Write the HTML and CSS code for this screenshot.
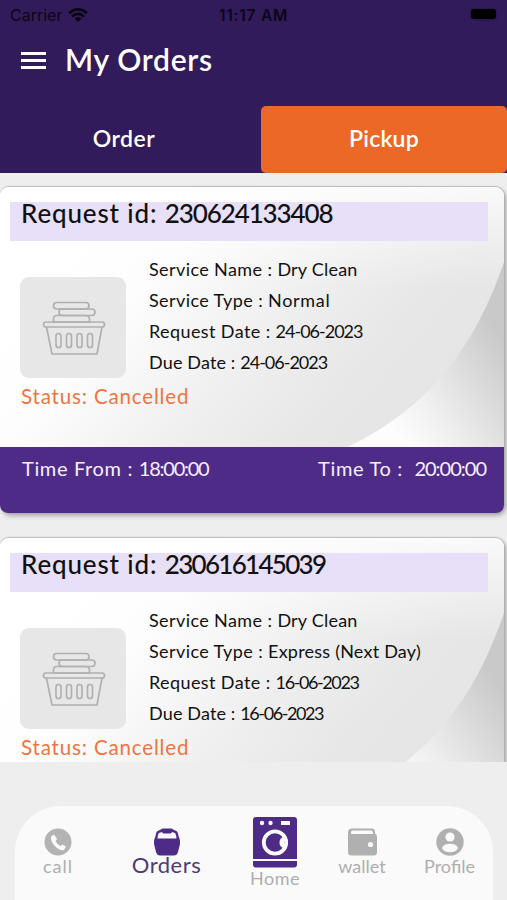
FILE: index.html
```html
<!DOCTYPE html>
<html lang="en">
<head>
<meta charset="utf-8">
<title>My Orders</title>
<link rel="stylesheet" href="styles.css">
</head>
<body>
<svg class="defs" width="0" height="0" aria-hidden="true">
  <defs>
    <linearGradient id="face" gradientUnits="userSpaceOnUse" x1="100" y1="20" x2="390" y2="270">
      <stop offset="0" stop-color="#fff"/><stop offset=".22" stop-color="#fdfdfd"/><stop offset=".55" stop-color="#efefef"/><stop offset=".8" stop-color="#e7e7e7"/><stop offset="1" stop-color="#e5e5e5"/>
    </linearGradient>
    <linearGradient id="top" x1="0" y1="0" x2="0" y2="1">
      <stop offset="0" stop-color="#fff" stop-opacity=".75"/><stop offset="1" stop-color="#fff" stop-opacity="0"/>
    </linearGradient>
    <linearGradient id="fold" gradientUnits="userSpaceOnUse" x1="400" y1="250" x2="515" y2="170">
      <stop offset="0" stop-color="#fdfdfd"/><stop offset=".3" stop-color="#f0f0f0"/><stop offset="1" stop-color="#c9c9c9"/>
    </linearGradient>
    <symbol id="card-art" viewBox="0 0 504 260">
      <rect width="504" height="260" fill="url(#face)"/>
      <rect width="504" height="100" fill="url(#top)"/>
      <path d="M348 260C430 220 475 160 504 75V260Z" fill="url(#fold)"/>
    </symbol>
    <symbol id="basket" viewBox="0 0 106 101">
      <g fill="none" stroke="#b0b0b0" stroke-width="1.700" stroke-linejoin="round">
        <rect x="33.500" y="25.500" width="35.500" height="6.500" rx="3.250"/>
        <rect x="39" y="32" width="36" height="6.500" rx="3.250"/>
        <path d="M36 38.500H66Q69.500 39 69.500 42V45H33.500V42Q33.500 39 36 38.500Z"/>
        <rect x="23.500" y="45" width="61" height="5" rx="2.500"/>
        <path d="M26.500 50L32 77H77L82 50"/>
        <rect x="36" y="56.500" width="5" height="14" rx="2.500"/>
        <rect x="46.500" y="56.500" width="5" height="14" rx="2.500"/>
        <rect x="57" y="56.500" width="5" height="14" rx="2.500"/>
        <rect x="67.500" y="56.500" width="5" height="14" rx="2.500"/>
      </g>
    </symbol>
  </defs>
</svg>

<header class="header">
  <div class="status-bar">
    <div class="carrier"><span>Carrier</span>
      <svg class="wifi" viewBox="0 0 20 14"><path d="M1 5.200Q10-2.800 19 5.200M4 8.500Q10 3.200 16 8.500" fill="none" stroke="#08040f" stroke-width="2.500"/><path d="M6.500 10.500Q10 7.600 13.500 10.500L10 14Z" fill="#08040f"/></svg>
    </div>
    <span class="clock">11:17 AM</span>
    <div class="battery-wrap"><span class="battery"></span></div>
  </div>
  <div class="title-row">
    <div class="menu"><i></i><i></i><i></i></div>
    <h1>My Orders</h1>
  </div>
  <div class="tabs">
    <div class="tab">Order</div>
    <div class="tab active">Pickup</div>
  </div>
</header>

<main class="list">
  <article class="card">
    <svg class="art"><use href="#card-art"/></svg>
    <div class="body">
      <h2>Request id: <span class="num">230624133408</span></h2>
      <div class="info">
        <svg class="thumb"><use href="#basket"/></svg>
        <div class="details">
          <div>Service Name : <span class="word">Dry Clean</span></div>
          <div>Service Type : <span class="word wide">Normal</span></div>
          <div>Request Date : <span class="date">24-06-2023</span></div>
          <div class="due">Due Date : <span class="date">24-06-2023</span></div>
        </div>
      </div>
      <div class="status">Status: Cancelled</div>
    </div>
    <footer class="times"><div>Time From : <span>18:00:00</span></div><div>Time To :&nbsp; <span class="end">20:00:00</span></div></footer>
  </article>
  <article class="card">
    <svg class="art"><use href="#card-art"/></svg>
    <div class="body">
      <h2>Request id: <span class="num narrow">230616145039</span></h2>
      <div class="info">
        <svg class="thumb"><use href="#basket"/></svg>
        <div class="details">
          <div>Service Name : <span class="word">Dry Clean</span></div>
          <div>Service Type : <span class="word">Express (Next Day)</span></div>
          <div>Request Date : <span class="date narrow">16-06-2023</span></div>
          <div class="due">Due Date : <span class="date narrow">16-06-2023</span></div>
        </div>
      </div>
      <div class="status">Status: Cancelled</div>
    </div>
  </article>
</main>

<nav class="nav">
  <div class="item call">
    <svg width="28" height="28" viewBox="0 0 28 28"><circle cx="14" cy="14" r="13.500" fill="#b3b3b3"/><path d="M7 8.500L10 6.500L13 11L11.500 13Q13 16.500 16.500 18L18.500 16.500L22 18.500L20 22Q17 22.800 13 20Q6.500 15 7 8.500Z" fill="#fafafa"/></svg>
    <span>call</span>
  </div>
  <div class="item orders">
    <svg width="28" height="28" viewBox="0 0 28 28"><path d="M10 .5H18Q19.500 .5 20 1.500L23.500 3Q25 4 25.500 8Q27.500 12 27 16L25 24Q24 27.500 21 27.500H7Q4 27.500 3 24L1 16Q.5 12 2.500 8Q3 4 4.500 3L8 1.500Q8.500 .5 10 .5Z" fill="#4d2b87"/><path d="M4.500 10.500Q4.800 6 6 5L9 4Q9.500 5.500 11 5.500H17Q18.500 5.500 19 4L22 5Q23.200 6 23.500 10.500Z" fill="#fafafa"/></svg>
    <span>Orders</span>
  </div>
  <div class="item home">
    <svg width="44" height="51" viewBox="0 0 44 51"><path d="M3 0H41Q44 0 44 3V42H0V3Q0 0 3 0ZM0 44H44V47.500Q44 50.500 41 50.500H3Q0 50.500 0 47.500Z" fill="#4d2b87"/><circle cx="9" cy="6" r="2.200" fill="#fafafa"/><circle cx="17.500" cy="6" r="2.200" fill="#fafafa"/><rect x="28" y="4" width="9" height="4" fill="#fafafa"/><circle cx="22" cy="25.500" r="11.200" fill="none" stroke="#fafafa" stroke-width="3.800"/><path d="M31 19.500Q26.500 21 26.500 25.500Q26.500 30 31 31.500Z" fill="#fafafa"/></svg>
    <span>Home</span>
  </div>
  <div class="item wallet">
    <svg width="29" height="28" viewBox="0 0 29 28"><path d="M4 .5H24Q26.500 .5 27 3V5.500Q29 6 29 9V24Q29 27.500 25.500 27.500H3.500Q0 27.500 0 24V4.500Q0 .5 4 .5Z" fill="#b0b0b0"/><path d="M3 6V4.500Q3 2.500 5 2.500H22.500Q25 2.500 25 5V6Z" fill="#fafafa"/><circle cx="22.500" cy="16.500" r="2.600" fill="#fafafa"/></svg>
    <span>wallet</span>
  </div>
  <div class="item profile">
    <svg width="28" height="28" viewBox="0 0 28 28"><circle cx="14" cy="14" r="13.700" fill="#b0b0b0"/><circle cx="14" cy="9" r="4.600" fill="#fafafa"/><ellipse cx="14" cy="20" rx="7.800" ry="4.200" fill="#fafafa"/></svg>
    <span>Profile</span>
  </div>
</nav>
</body>
</html>
```

FILE: styles.css
```css
* { box-sizing: border-box; }
body {
  margin: 0;
  width: 507px;
  height: 900px;
  overflow: hidden;
  display: flex;
  flex-direction: column;
  background: #eee;
  font-family: Lato, "Liberation Sans", sans-serif;
  color: #111;
}
h1, h2 { margin: 0; font-weight: 500; }
span { white-space: nowrap; }
.defs { position: absolute; }

.header { height: 173px; background: #321b5b; flex: none; }
.status-bar {
  height: 30px;
  padding: 0 10px;
  display: grid;
  grid-template-columns: 1fr auto 1fr;
  align-items: center;
  font: 16px Inter, sans-serif;
  color: #0b0615;
}
.carrier { display: flex; align-items: center; gap: 6px; }
.wifi { width: 20px; height: 14px; }
.clock { font-weight: 600; font-size: 15.500px; letter-spacing: .75px; }
.battery-wrap { display: flex; justify-content: flex-end; }
.battery { width: 25px; height: 10px; margin: 0 1px 2px 0; border-radius: 3px; background: #000; box-shadow: 0 0 2px #170c29; }
.title-row { height: 60px; padding-left: 21px; display: flex; align-items: center; gap: 19px; }
.menu { width: 25px; display: flex; flex-direction: column; gap: 4px; }
.menu i { height: 3px; background: #fff; }
h1 { color: #fff; font-size: 30px; font-weight: 600; letter-spacing: .7px; margin-top: -2px; }
.tabs { margin-top: 16px; height: 67px; display: flex; }
.tab {
  width: 261px;
  padding: 0 13px 3px 0;
  display: flex;
  align-items: center;
  justify-content: center;
  color: #fff;
  font-size: 23px;
  font-weight: 600;
  letter-spacing: .5px;
}
.tab.active { width: 246px; padding-right: 0; background: #ec6827; border-radius: 5px; letter-spacing: .2px; }

.list { height: 589px; padding-top: 14px; overflow: hidden; flex: none; }
.card {
  position: relative;
  width: 504px;
  height: 326px;
  margin-bottom: 24.500px;
  border-radius: 9px;
  background: #fff;
  box-shadow: 0 -1px 1px #bdbdbd, 1px 0 2px #aaa, 2px 3px 4px #aaa;
}
.art { position: absolute; inset: 0; width: 504px; height: 260px; border-radius: 9px 9px 0 0; }
.body { position: relative; height: 260px; padding: 15px 16px 0 10px; }
h2 {
  height: 39px;
  padding-left: 11px;
  line-height: 22px;
  font-size: 26px;
  letter-spacing: .85px;
  background: #e8e0f9;
}
.num { letter-spacing: -1.100px; }
.num.narrow { letter-spacing: -1.700px; }
.info { display: flex; gap: 23px; padding-left: 10px; }
.thumb { width: 106px; height: 101px; margin-top: 36px; border-radius: 9px; background: #e7e7e7; }
.details {
  display: flex;
  flex-direction: column;
  padding-top: 13px;
  font-size: 18px;
  line-height: 31px;
  letter-spacing: .4px;
  white-space: nowrap;
}
.details .due { letter-spacing: .15px; }
.details .word { letter-spacing: .22px; }
.details .wide { letter-spacing: .7px; }
.details .date { letter-spacing: -1px; }
.details .date.narrow { letter-spacing: -1.400px; }
.status { padding-left: 11px; margin-top: 4px; line-height: 28px; font-size: 20.500px; letter-spacing: .85px; color: #ed7540; }
.times {
  position: relative;
  height: 66px;
  padding: 8px 18px 0 22px;
  display: flex;
  justify-content: space-between;
  border-radius: 0 0 8px 8px;
  background: #4e2b87;
  color: #f7efff;
  font-size: 20px;
  line-height: 27px;
  letter-spacing: .65px;
}
.times span { letter-spacing: -1.250px; }
.times .end { letter-spacing: -1px; }

.nav {
  margin: 44px 14px 0 15px;
  height: 94px;
  border-radius: 46px 46px 0 0;
  background: #fafafa;
  display: flex;
  color: #aeaeae;
}
.item { display: flex; flex-direction: column; align-items: center; padding-top: 22px; font-size: 18px; line-height: 20px; }
.item svg { flex: none; }
.call { width: 86px; }
.call span { letter-spacing: 1px; }
.orders { width: 131px; color: #4d3a78; font-size: 22px; }
.orders span { margin-top: -1px; letter-spacing: .5px; }
.home { width: 86px; padding-top: 11px; }
.home span { letter-spacing: .5px; }
.wallet { width: 88px; }
.profile { width: 87px; }
```
